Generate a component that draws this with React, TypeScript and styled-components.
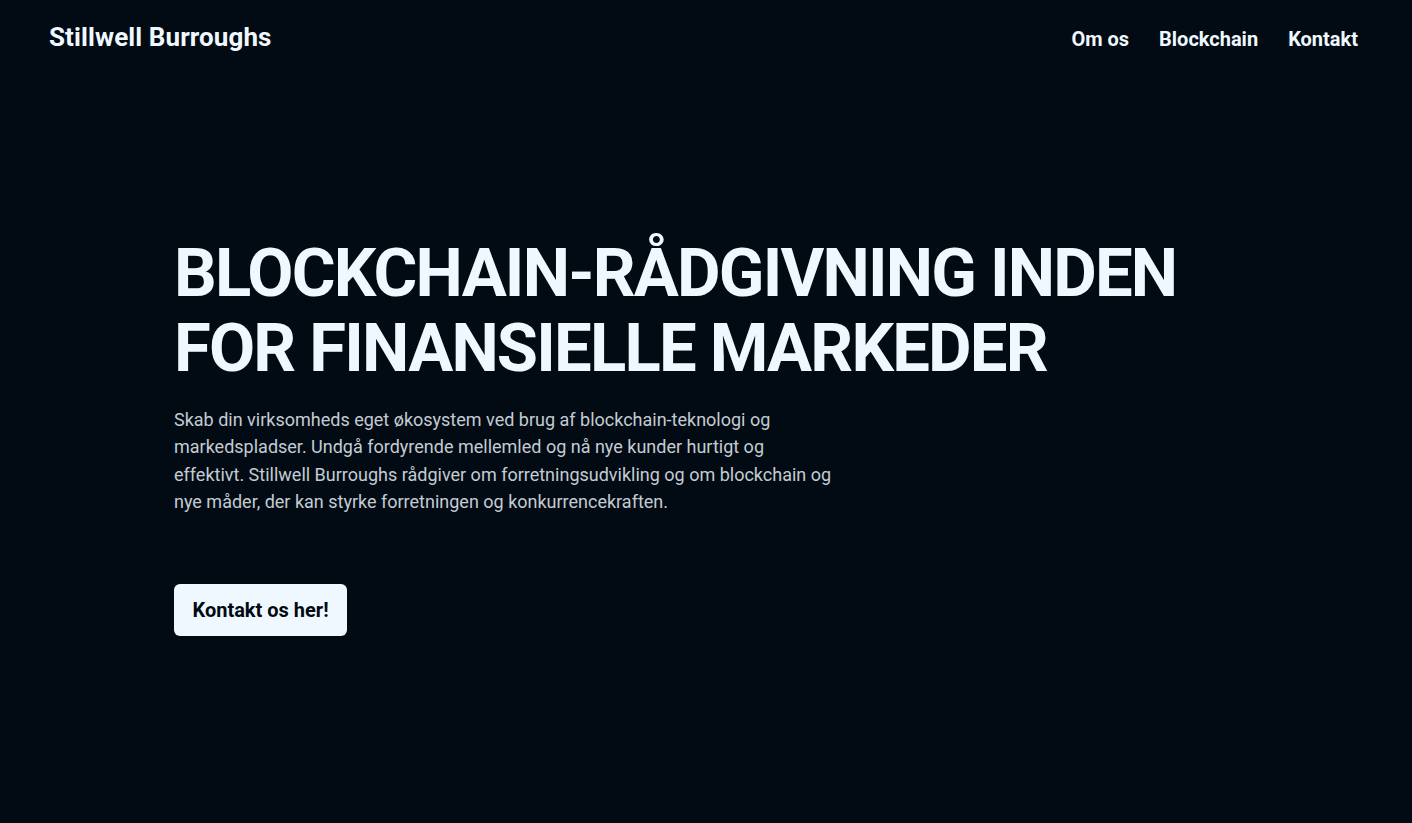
import React from "react";
import styled, { createGlobalStyle } from "styled-components";

const Global = createGlobalStyle`
  html, body { margin: 0; padding: 0; background: #020b14; }
  body { font-family: Roboto, "Liberation Sans", sans-serif; color: #f0f8ff; }
  * { box-sizing: border-box; }
`;

const Page = styled.div`
  min-height: 823px;
  background: #020b14;
  display: flex;
  flex-direction: column;
`;

const Header = styled.header`
  display: flex;
  justify-content: space-between;
  align-items: center;
  padding: 13px 54px 0 49px;
  height: 65px;
`;

const Logo = styled.a`
  font-size: 26px;
  font-weight: 700;
  letter-spacing: 0.1px;
  color: #f0f8ff;
  text-decoration: none;
  margin-top: -5px;
`;

const Nav = styled.nav`
  display: flex;
  gap: 30px;
`;

const NavLink = styled.a`
  font-size: 20px;
  font-weight: 700;
  color: #f0f8ff;
  text-decoration: none;
`;

const Hero = styled.main`
  width: 1064px;
  margin: 0 auto;
  padding-top: 171px;
`;

const Title = styled.h1`
  margin: 0;
  font-size: 67px;
  line-height: 75px;
  font-weight: 700;
  letter-spacing: -1.8px;
  color: #f0f8ff;
  text-transform: uppercase;
`;

const Lead = styled.p`
  margin: 20px 0 0;
  max-width: 662px;
  font-size: 18px;
  line-height: 27.3px;
  color: #c4cbd2;
`;

const Button = styled.a`
  display: inline-flex;
  align-items: center;
  justify-content: center;
  margin-top: 69px;
  width: 173px;
  height: 52px;
  border-radius: 6px;
  background: #f0f8ff;
  color: #020b14;
  font-size: 20px;
  font-weight: 700;
  text-decoration: none;
`;

export default function App() {
  return (
    <Page>
      <Global />
      <Header>
        <Logo href="#">Stillwell Burroughs</Logo>
        <Nav>
          <NavLink href="#">Om os</NavLink>
          <NavLink href="#">Blockchain</NavLink>
          <NavLink href="#">Kontakt</NavLink>
        </Nav>
      </Header>
      <Hero>
        <Title>
          Blockchain-rådgivning inden
          <br />
          for finansielle markeder
        </Title>
        <Lead>
          Skab din virksomheds eget økosystem ved brug af blockchain-teknologi og
          markedspladser. Undgå fordyrende mellemled og nå nye kunder hurtigt og
          effektivt. Stillwell Burroughs rådgiver om forretningsudvikling og om
          blockchain og nye måder, der kan styrke forretningen og konkurrencekraften.
        </Lead>
        <Button href="#">Kontakt os her!</Button>
      </Hero>
    </Page>
  );
}
